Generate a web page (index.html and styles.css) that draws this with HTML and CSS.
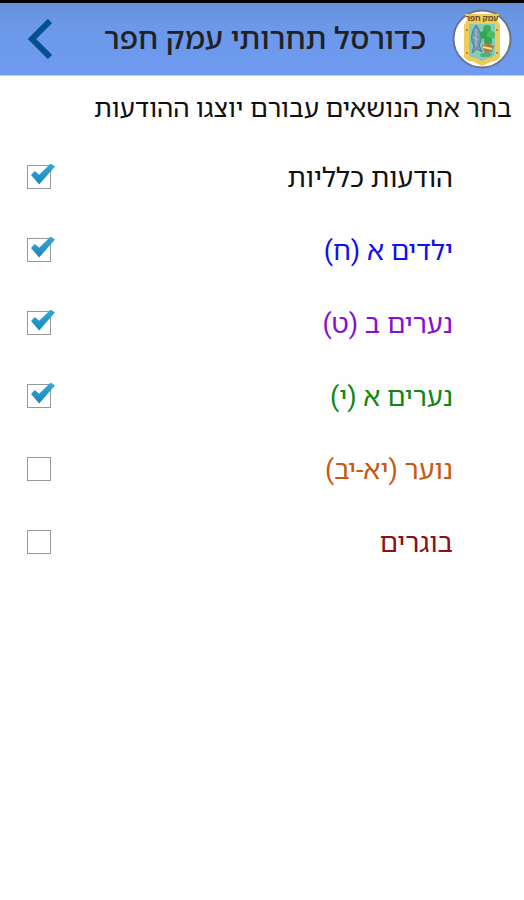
FILE: index.html
```html
<!doctype html>
<html lang="he" dir="rtl">
<head>
	<meta charset="utf-8">
	<meta name="viewport" content="width=device-width, initial-scale=1.0">

	<title>כדורסל תחרותי עמק חפר</title>

	<link rel="stylesheet" href="styles.css">
</head>
<body>
	<header class="header">
		<svg class="logo" viewBox="0 0 60 60" aria-hidden="true">
			<circle cx="30" cy="30" r="28.5" fill="#fff" stroke="#68758d" stroke-width="2"/>
			<path d="M13 5H47L45 11L48 16V48Q46 52 39 53L30 57L22 53Q14 52 12 48V16L15 11Z" fill="#f0ca5b"/>
			<path d="M17 15H43V46Q41 49 36 49L30 52L24 49Q19 49 17 46Z" fill="#82cdb5"/>
			<text class="logo-text" x="30" y="12" text-anchor="middle">עמק חפר</text>
			<path d="M24 16Q33 28 27 36L30 43L25 40L20 44L22 37Q16 28 24 16Z" fill="#7399b3" stroke="#547b99"/>
			<path d="M24 20V38M21 28L26 31" stroke="#b0cbd5" fill="none"/>
			<path d="M35 28L34 43" stroke="#777344" stroke-width="2"/>
			<circle cx="35" cy="20" r="4" fill="#3eaf56"/>
			<circle cx="32" cy="26" r="4" fill="#36a54e"/>
			<circle cx="39" cy="26" r="4" fill="#4ebd5d"/>
			<circle cx="36" cy="32" r="4" fill="#37a651"/>
			<path d="M30 37L35 34L42 37L40 43L33 44Z" fill="#b6773d"/>
			<path d="M31 38L40 40" stroke="#efe0a0" stroke-width="2"/>
			<path d="M28 45Q35 42 41 45L37 48H29Z" fill="#55ac7c"/>
			<path d="M15 20V22M45 20V22M15 43V45M45 43V45" stroke="#b7893d" stroke-width="2"/>
		</svg>
		<h1 class="title">כדורסל תחרותי עמק חפר</h1>
		<button class="back" type="button" aria-label="חזרה">
			<svg class="back-icon" viewBox="0 0 24 40" aria-hidden="true">
				<path d="M22 2L4 20L22 38" fill="none" stroke="#044f91" stroke-width="6"/>
			</svg>
		</button>
	</header>

	<main>
		<form>
			<fieldset class="topics">
				<legend class="intro">בחר את הנושאים עבורם יוצגו ההודעות</legend>
				<label class="topic general">הודעות כלליות <input class="check" type="checkbox" checked></label>
				<label class="topic kids">ילדים א (ח) <input class="check" type="checkbox" checked></label>
				<label class="topic boys-b">נערים ב (ט) <input class="check" type="checkbox" checked></label>
				<label class="topic boys-a">נערים א (י) <input class="check" type="checkbox" checked></label>
				<label class="topic youth">נוער (יא-יב) <input class="check" type="checkbox"></label>
				<label class="topic adults">בוגרים <input class="check" type="checkbox"></label>
			</fieldset>
		</form>
	</main>
</body>
</html>
```

FILE: styles.css
```css
* {
	box-sizing: border-box;
}

body {
	margin: 0;
	background: #fefefe;
	color: #111;
	font-family: Roboto, "Noto Sans Hebrew", "Open Sans", sans-serif;
	font-size: 26px;
}

.header {
	display: flex;
	align-items: center;
	height: 76px;
	padding: 0 12px 0 20px;
	border-top: 3px solid #000;
	border-bottom: 1px solid #b8caf4;
	background: linear-gradient(#6790d8, #6c98ea 30%, #6e9bf0);
}

.logo {
	width: 60px;
	height: 60px;
	flex: none;
}

.logo-text {
	fill: #654d25;
	font-size: 8px;
	font-weight: 700;
}

.title {
	flex: 1;
	margin: 0 26px 0 0;
	color: #222;
	font-size: 30px;
	font-weight: 500;
	line-height: 40px;
	white-space: nowrap;
}

.back {
	display: flex;
	justify-content: center;
	width: 40px;
	padding: 0;
	border: 0;
	background: none;
	cursor: pointer;
}

.back-icon {
	width: 24px;
	height: 40px;
}

.topics {
	margin: 0;
	padding: 0;
	border: 0;
}

.intro {
	padding: 12px 12px 0 0;
	line-height: 40px;
	white-space: nowrap;
	margin-bottom: 12px;
}

.topic {
	display: flex;
	align-items: center;
	justify-content: space-between;
	height: 73px;
	padding: 0 71px 0 27px;
	font-size: 27px;
	cursor: pointer;
}

.check {
	position: relative;
	width: 24px;
	height: 24px;
	margin: 0;
	border: 1px solid #999;
	background: #fff;
	appearance: none;
}

.check:checked::after {
	content: "";
	position: absolute;
	top: -2px;
	left: 3px;
	width: 24px;
	height: 21px;
	background: linear-gradient(#36a8d4, #1587bd);
	clip-path: polygon(0 55%, 16% 36%, 34% 54%, 82% 0, 100% 14%, 34% 100%);
}

.general {
	color: #111;
}

.kids {
	color: #1010f0;
}

.boys-b {
	color: #8510d0;
}

.boys-a {
	color: #128512;
}

.youth {
	color: #c65a10;
}

.adults {
	color: #8b1018;
}
```
